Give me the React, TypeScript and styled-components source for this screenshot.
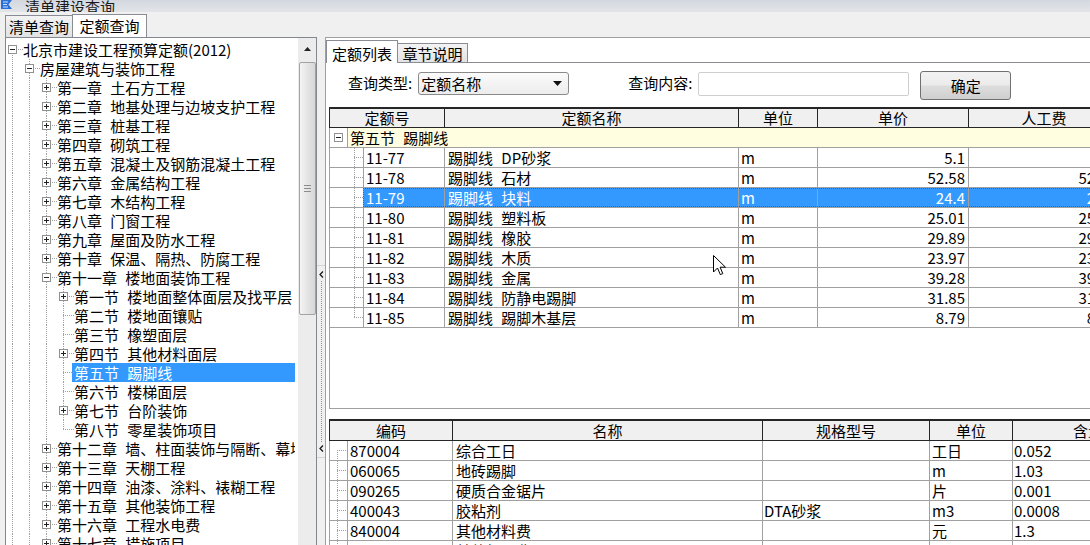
import React from "react";
import styled, { createGlobalStyle } from "styled-components";

const GlobalStyle = createGlobalStyle`
  html, body {
    margin: 0;
    padding: 0;
  }
  body {
    background: #f0f0f0;
    font-family: "Noto Sans CJK SC", "Noto Sans", sans-serif;
    font-size: 15px;
    color: #000;
    overflow: hidden;
  }
`;

const dotsV = "repeating-linear-gradient(to bottom, #a0a0a0 0 1px, transparent 1px 2px)";
const dotsH = "repeating-linear-gradient(to right, #a0a0a0 0 1px, transparent 1px 2px)";

const Window = styled.div`
  position: relative;
  width: 1090px;
  height: 545px;
  display: flex;
  flex-direction: column;
  overflow: hidden;
  background: #f0f0f0;
  word-spacing: 5px;
`;

const TitleBar = styled.div`
  flex: none;
  height: 12px;
  display: flex;
  align-items: flex-end;
  overflow: hidden;
  background: linear-gradient(#d3d8df, #e2e4e8);
`;

const AppIcon = styled.svg`
  flex: none;
  align-self: flex-start;
  margin: 0 12px 0 1px;
`;

const TitleText = styled.span`
  line-height: 19px;
  margin-bottom: -4px;
  color: #1a1a1a;
  white-space: nowrap;
`;

const MainTabBar = styled.div`
  flex: none;
  height: 25px;
  display: flex;
  align-items: flex-end;
  padding-left: 5px;
`;

const MainTab = styled.div<{ $active?: boolean }>`
  box-sizing: border-box;
  width: ${(p) => (p.$active ? 75 : 67)}px;
  height: ${(p) => (p.$active ? 23 : 22)}px;
  line-height: ${(p) => (p.$active ? 21 : 22)}px;
  text-align: center;
  border: 1px solid #898c95;
  border-bottom: none;
  ${(p) => (p.$active ? "" : "border-right: none;")}
  background: ${(p) => (p.$active ? "#fff" : "linear-gradient(#f3f3f3, #e2e2e2)")};
  white-space: nowrap;
`;

const Body = styled.div`
  flex: 1;
  min-height: 0;
  display: flex;
  padding-left: 5px;
`;

const TreePanel = styled.div`
  flex: none;
  width: 312px;
  box-sizing: border-box;
  border: 1px solid #828790;
  border-bottom: none;
  background: #fff;
  display: flex;
`;

const TreeBody = styled.div`
  flex: 1;
  min-width: 0;
  overflow: hidden;
  padding-top: 2px;
`;

const TreeRowBox = styled.div`
  display: flex;
  height: 19px;
  white-space: nowrap;
`;

const Guide = styled.span`
  position: relative;
  flex: none;
  width: 17px;
  &::before {
    content: "";
    position: absolute;
    left: 6px;
    top: 0;
    bottom: 0;
    width: 1px;
    background: ${dotsV};
  }
`;

const Connector = styled.span<{ $w: number; $x: number; $first?: boolean; $last?: boolean }>`
  position: relative;
  flex: none;
  width: ${(p) => p.$w}px;
  &::before {
    content: "";
    position: absolute;
    left: ${(p) => p.$x}px;
    width: 1px;
    top: ${(p) => (p.$first ? "9px" : "0")};
    ${(p) => (p.$last ? "height: " + (p.$first ? 1 : 10) + "px;" : "bottom: 0;")}
    background: ${dotsV};
  }
  &::after {
    content: "";
    position: absolute;
    left: ${(p) => p.$x}px;
    right: 0;
    top: 9px;
    height: 1px;
    background: ${dotsH};
  }
`;

const BoxSlot = styled.span`
  position: relative;
  flex: none;
  width: 17px;
`;

const ExpandBox = styled.span<{ $x: number; $plus?: boolean }>`
  position: absolute;
  z-index: 1;
  left: ${(p) => p.$x}px;
  top: 5px;
  width: 9px;
  height: 9px;
  box-sizing: border-box;
  border: 1px solid #919191;
  background: #fff;
  &::before {
    content: "";
    position: absolute;
    left: 1px;
    top: 3px;
    width: 5px;
    height: 1px;
    background: #222;
  }
  &::after {
    content: "";
    display: ${(p) => (p.$plus ? "block" : "none")};
    position: absolute;
    left: 3px;
    top: 1px;
    width: 1px;
    height: 5px;
    background: #222;
  }
`;

const TreeLabel = styled.span<{ $selected?: boolean }>`
  flex: 1;
  min-width: 0;
  overflow: hidden;
  margin: 0 3px 0 -2px;
  padding-left: 2px;
  line-height: 19px;
  background: ${(p) => (p.$selected ? "#3399ff" : "transparent")};
  color: ${(p) => (p.$selected ? "#fff" : "#000")};
`;

const VScroll = styled.div`
  flex: none;
  width: 18px;
  background: #ececec;
  display: flex;
  flex-direction: column;
  align-items: center;
`;

const ScrollArrow = styled.div`
  height: 22px;
  width: 100%;
  display: flex;
  align-items: center;
  justify-content: center;
`;

const Thumb = styled.div`
  margin-top: 2px;
  width: 17px;
  height: 253px;
  box-sizing: border-box;
  border: 1px solid #a3a3a3;
  border-radius: 2px;
  background: linear-gradient(to right, #f5f5f5, #e4e4e4 50%, #d7d7d7);
  display: flex;
  align-items: center;
  justify-content: center;
`;

const Grip = styled.div`
  width: 7px;
  height: 7px;
  background: repeating-linear-gradient(to bottom, #8c8c8c 0 1px, transparent 1px 3px);
`;

const Splitter = styled.div`
  flex: none;
  width: 8px;
  box-sizing: border-box;
  padding-top: 228px;
  display: flex;
  flex-direction: column;
  align-items: center;
`;

const Collapse = styled.div`
  width: 8px;
  height: 193px;
  box-sizing: border-box;
  border-top: 1px solid #d4d4d4;
  border-bottom: 1px solid #d4d4d4;
  padding: 5px 0;
  display: flex;
  flex-direction: column;
  align-items: center;
`;

const CollapseLine = styled.div`
  flex: 1;
  width: 1px;
  margin: 3px 0;
  background: repeating-linear-gradient(to bottom, #6f93d2 0 1px, transparent 1px 2px);
`;

const RightPanel = styled.div`
  flex: 1;
  min-width: 0;
  overflow: hidden;
  border-left: 1px solid #a0a0a0;
  border-top: 1px solid #a0a0a0;
  background: #fff;
  padding-top: 2px;
  display: flex;
  flex-direction: column;
`;

const SubTabBar = styled.div`
  flex: none;
  height: 23px;
  display: flex;
  align-items: flex-end;
`;

const SubTab = styled.div<{ $active?: boolean }>`
  flex: none;
  box-sizing: border-box;
  width: ${(p) => (p.$active ? 72 : 70)}px;
  height: ${(p) => (p.$active ? 23 : 20)}px;
  padding-top: ${(p) => (p.$active ? 2 : 0)}px;
  line-height: ${(p) => (p.$active ? 21 : 19)}px;
  text-align: center;
  border: 1px solid #898c95;
  ${(p) => (p.$active ? "border-bottom: none;" : "border-left: none;")}
  background: ${(p) => (p.$active ? "#fff" : "linear-gradient(#f3f3f3, #e3e3e3)")};
  white-space: nowrap;
`;

const SubTabFill = styled.div`
  flex: 1;
  align-self: stretch;
  border-bottom: 1px solid #898c95;
`;

const QueryRow = styled.div`
  flex: none;
  height: 44px;
  box-sizing: border-box;
  padding: 8px 0 0 22px;
  display: flex;
  align-items: flex-start;
  white-space: nowrap;
`;

const QueryLabel = styled.span<{ $gap?: number }>`
  line-height: 24px;
  margin: 0 6px 0 ${(p) => p.$gap || 0}px;
`;

const Combo = styled.div`
  margin-top: 1px;
  width: 151px;
  height: 23px;
  box-sizing: border-box;
  border: 1px solid #8a8a8a;
  border-radius: 3px;
  background: linear-gradient(#fbfbfb, #ececec);
  display: flex;
  align-items: center;
  justify-content: space-between;
  padding: 0 6px 0 2px;
  line-height: 21px;
`;

const TextInput = styled.div`
  margin-top: 1px;
  width: 211px;
  height: 24px;
  box-sizing: border-box;
  border: 1px solid #cfcfcf;
  border-radius: 2px;
  background: #fff;
`;

const Button = styled.div`
  margin-left: 11px;
  width: 91px;
  height: 29px;
  box-sizing: border-box;
  border: 1px solid #707070;
  border-radius: 3px;
  background: linear-gradient(#f2f2f2, #ebebeb 48%, #dddddd 52%, #cfcfcf);
  text-align: center;
  line-height: 27px;
`;

const Grid = styled.div<{ $height?: number; $gap?: number }>`
  flex: none;
  margin: ${(p) => p.$gap || 0}px 0 0 3px;
  ${(p) => (p.$height ? "height: " + p.$height + "px;" : "flex: 1;")}
  box-sizing: border-box;
  border-left: 1px solid #a0a0a0;
  border-bottom: 1px solid #a0a0a0;
  white-space: nowrap;
`;

const HeaderRow = styled.div<{ $h: number }>`
  display: flex;
  margin-left: -1px;
  height: ${(p) => p.$h}px;
  box-sizing: border-box;
  border-top: 2px solid #262626;
  border-bottom: 1px solid #262626;
  border-left: 1px solid #262626;
  background: #f0f0f0;
  line-height: ${(p) => p.$h - 3}px;
`;

const HeadCell = styled.div<{ $w: number }>`
  flex: none;
  width: ${(p) => p.$w}px;
  box-sizing: border-box;
  border-right: 1px solid #262626;
  text-align: center;
`;

const Row = styled.div`
  display: flex;
  height: 20px;
  box-sizing: border-box;
  border-bottom: 1px solid #a0a0a0;
  line-height: 19px;
`;

const RowCells = styled.div<{ $selected?: boolean }>`
  display: flex;
  background: ${(p) => (p.$selected ? "#3399ff" : "transparent")};
  color: ${(p) => (p.$selected ? "#fff" : "#000")};
  outline: ${(p) => (p.$selected ? "1px dotted #5c5c5c" : "none")};
  outline-offset: -1px;
`;

const Cell = styled.div<{ $w: number; $lead?: boolean; $right?: boolean; $pad?: number }>`
  flex: none;
  width: ${(p) => p.$w}px;
  box-sizing: border-box;
  border-right: 1px solid #a0a0a0;
  ${(p) => (p.$lead ? "border-left: 1px solid #a0a0a0;" : "")}
  padding: 0 3px 0 ${(p) => (p.$pad === undefined ? 3 : p.$pad)}px;
  text-align: ${(p) => (p.$right ? "right" : "left")};
  overflow: hidden;
`;

const GroupCell = styled.div`
  flex: none;
  width: 773px;
  box-sizing: border-box;
  border-left: 1px solid #a0a0a0;
  background: #fffee0;
  padding-left: 2px;
`;

const Cursor = styled.svg`
  position: absolute;
  left: 713px;
  top: 255px;
`;

type TreeItem = {
  level: number;
  label: string;
  box?: "plus" | "minus";
  first?: boolean;
  last?: boolean;
  selected?: boolean;
};

const treeItems: TreeItem[] = [
  { level: 0, label: "北京市建设工程预算定额(2012)", box: "minus", first: true },
  { level: 1, label: "房屋建筑与装饰工程", box: "minus" },
  { level: 2, label: "第一章 土石方工程", box: "plus" },
  { level: 2, label: "第二章 地基处理与边坡支护工程", box: "plus" },
  { level: 2, label: "第三章 桩基工程", box: "plus" },
  { level: 2, label: "第四章 砌筑工程", box: "plus" },
  { level: 2, label: "第五章 混凝土及钢筋混凝土工程", box: "plus" },
  { level: 2, label: "第六章 金属结构工程", box: "plus" },
  { level: 2, label: "第七章 木结构工程", box: "plus" },
  { level: 2, label: "第八章 门窗工程", box: "plus" },
  { level: 2, label: "第九章 屋面及防水工程", box: "plus" },
  { level: 2, label: "第十章 保温、隔热、防腐工程", box: "plus" },
  { level: 2, label: "第十一章 楼地面装饰工程", box: "minus" },
  { level: 3, label: "第一节 楼地面整体面层及找平层", box: "plus" },
  { level: 3, label: "第二节 楼地面镶贴" },
  { level: 3, label: "第三节 橡塑面层" },
  { level: 3, label: "第四节 其他材料面层", box: "plus" },
  { level: 3, label: "第五节 踢脚线", selected: true },
  { level: 3, label: "第六节 楼梯面层" },
  { level: 3, label: "第七节 台阶装饰", box: "plus" },
  { level: 3, label: "第八节 零星装饰项目", last: true },
  { level: 2, label: "第十二章 墙、柱面装饰与隔断、幕墙工程", box: "plus" },
  { level: 2, label: "第十三章 天棚工程", box: "plus" },
  { level: 2, label: "第十四章 油漆、涂料、裱糊工程", box: "plus" },
  { level: 2, label: "第十五章 其他装饰工程", box: "plus" },
  { level: 2, label: "第十六章 工程水电费", box: "plus" },
  { level: 2, label: "第十七章 措施项目", box: "plus" },
];

const quotaCols = [
  { title: "定额号", w: 115 },
  { title: "定额名称", w: 294 },
  { title: "单位", w: 79 },
  { title: "单价", w: 151 },
  { title: "人工费", w: 151 },
];

const quotas = [
  { code: "11-77", name: "踢脚线 DP砂浆", price: "5.1" },
  { code: "11-78", name: "踢脚线 石材", price: "52.58" },
  { code: "11-79", name: "踢脚线 块料", price: "24.4", selected: true },
  { code: "11-80", name: "踢脚线 塑料板", price: "25.01" },
  { code: "11-81", name: "踢脚线 橡胶", price: "29.89" },
  { code: "11-82", name: "踢脚线 木质", price: "23.97" },
  { code: "11-83", name: "踢脚线 金属", price: "39.28" },
  { code: "11-84", name: "踢脚线 防静电踢脚", price: "31.85" },
  { code: "11-85", name: "踢脚线 踢脚木基层", price: "8.79" },
];

const materialCols = [
  { title: "编码", w: 123 },
  { title: "名称", w: 310 },
  { title: "规格型号", w: 167 },
  { title: "单位", w: 83 },
  { title: "含量", w: 151 },
];

const materials = [
  { code: "870004", name: "综合工日", spec: "", unit: "工日", qty: "0.052" },
  { code: "060065", name: "地砖踢脚", spec: "", unit: "m", qty: "1.03" },
  { code: "090265", name: "硬质合金锯片", spec: "", unit: "片", qty: "0.001" },
  { code: "400043", name: "胶粘剂", spec: "DTA砂浆", unit: "m3", qty: "0.0008" },
  { code: "840004", name: "其他材料费", spec: "", unit: "元", qty: "1.3" },
  { code: "840023", name: "其他机具费", spec: "", unit: "元", qty: "0.24" },
];

const TreeNode = ({ item }: { item: TreeItem }) => (
  <TreeRowBox>
    {Array.from({ length: item.level }).map((_, i) => (
      <Guide key={i} />
    ))}
    <Connector $w={17} $x={6} $first={item.first} $last={item.last}>
      {item.box && <ExpandBox $x={2} $plus={item.box === "plus"} />}
    </Connector>
    <TreeLabel $selected={item.selected}>{item.label}</TreeLabel>
  </TreeRowBox>
);

const Chevron = () => (
  <svg width="5" height="7" viewBox="0 0 5 7">
    <path d="M4 0.5 L1 3.5 L4 6.5" fill="none" stroke="#111" strokeWidth="1.2" />
  </svg>
);

export default function App() {
  return (
    <>
      <GlobalStyle />
      <Window>
        <TitleBar>
          <AppIcon width="12" height="9" viewBox="0 0 12 9">
            <path d="M0 0 H11 L7.5 4.5 L11 9 H0 Z" fill="#2b6fd6" />
            <path d="M2 2 H7 M2 4.5 H6 M2 7 H7" stroke="#cfe0ff" strokeWidth="1" />
          </AppIcon>
          <TitleText>清单建设查询</TitleText>
        </TitleBar>

        <MainTabBar>
          <MainTab>清单查询</MainTab>
          <MainTab $active>定额查询</MainTab>
        </MainTabBar>

        <Body>
          <TreePanel>
            <TreeBody>
              {treeItems.map((item, i) => (
                <TreeNode key={i} item={item} />
              ))}
            </TreeBody>
            <VScroll>
              <ScrollArrow>
                <svg width="7" height="4" viewBox="0 0 7 4">
                  <path d="M0 4 L3.5 0 L7 4 Z" fill="#222" />
                </svg>
              </ScrollArrow>
              <Thumb>
                <Grip />
              </Thumb>
            </VScroll>
          </TreePanel>

          <Splitter>
            <Collapse>
              <Chevron />
              <CollapseLine />
              <Chevron />
            </Collapse>
          </Splitter>

          <RightPanel>
            <SubTabBar>
              <SubTab $active>定额列表</SubTab>
              <SubTab>章节说明</SubTab>
              <SubTabFill />
            </SubTabBar>

            <QueryRow>
              <QueryLabel>查询类型:</QueryLabel>
              <Combo>
                <span>定额名称</span>
                <svg width="9" height="5" viewBox="0 0 9 5">
                  <path d="M0 0 H9 L4.5 5 Z" fill="#111" />
                </svg>
              </Combo>
              <QueryLabel $gap={59}>查询内容:</QueryLabel>
              <TextInput />
              <Button>确定</Button>
            </QueryRow>

            <Grid $height={302}>
              <HeaderRow $h={21}>
                {quotaCols.map((c) => (
                  <HeadCell key={c.title} $w={c.w}>
                    {c.title}
                  </HeadCell>
                ))}
              </HeaderRow>
              <Row>
                <BoxSlot>
                  <ExpandBox $x={4} />
                </BoxSlot>
                <GroupCell>第五节 踢脚线</GroupCell>
              </Row>
              {quotas.map((q, i) => (
                <Row key={q.code}>
                  <Connector $w={33} $x={24} $last={i === quotas.length - 1} />
                  <RowCells $selected={q.selected}>
                    <Cell $w={82} $lead $pad={2}>
                      {q.code}
                    </Cell>
                    <Cell $w={294}>{q.name}</Cell>
                    <Cell $w={79} $pad={2}>
                      m
                    </Cell>
                    <Cell $w={151} $right>
                      {q.price}
                    </Cell>
                    <Cell $w={151} $right>
                      {q.price}
                    </Cell>
                  </RowCells>
                </Row>
              ))}
            </Grid>

            <Grid $gap={10}>
              <HeaderRow $h={22}>
                {materialCols.map((c) => (
                  <HeadCell key={c.title} $w={c.w}>
                    {c.title}
                  </HeadCell>
                ))}
              </HeaderRow>
              {materials.map((m, i) => (
                <Row key={m.code}>
                  <Connector $w={17} $x={7} $first={i === 0} />
                  <RowCells>
                    <Cell $w={106} $lead $pad={2}>
                      {m.code}
                    </Cell>
                    <Cell $w={310}>{m.name}</Cell>
                    <Cell $w={167} $pad={1}>
                      {m.spec}
                    </Cell>
                    <Cell $w={83} $pad={2}>
                      {m.unit}
                    </Cell>
                    <Cell $w={151} $pad={1}>
                      {m.qty}
                    </Cell>
                  </RowCells>
                </Row>
              ))}
            </Grid>
          </RightPanel>
        </Body>

        <Cursor width="13" height="21" viewBox="0 0 13 21">
          <path
            d="M0.5 0.5 V17 L4.5 13 L7.3 19.6 L9.8 18.6 L7.1 12.2 H12.5 Z"
            fill="#fff"
            stroke="#000"
            strokeWidth="1"
            strokeLinejoin="round"
          />
        </Cursor>
      </Window>
    </>
  );
}
